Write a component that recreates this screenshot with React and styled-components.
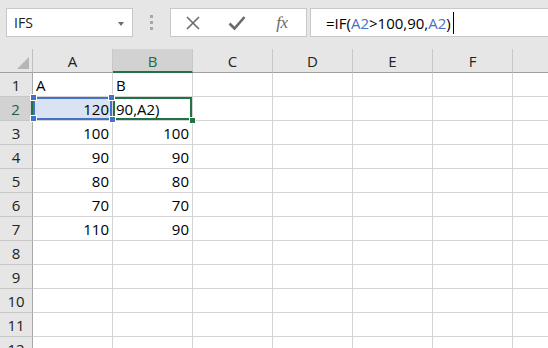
import styled, { createGlobalStyle, css } from 'styled-components';

const GREEN = '#217346';
const BLUE = '#4472c4';
const FONT = `'Open Sans', 'Noto Sans', 'DejaVu Sans', sans-serif`;

const GlobalStyle = createGlobalStyle`
    html, body {
        margin: 0;
        padding: 0;
        background: #e6e6e6;
        font-family: ${FONT};
        overflow: hidden;
    }
`;

const Page = styled.div`
    width: 548px;
    height: 348px;
    overflow: hidden;
    background: #e6e6e6;
`;

const Toolbar = styled.div`
    display: flex;
    align-items: center;
    height: 49px;
    padding: 0 0 4px 6px;
    box-sizing: border-box;
`;

const NameBox = styled.div`
    width: 127px;
    height: 29px;
    box-sizing: border-box;
    background: #fff;
    border: 1px solid #c8c8c8;
    display: flex;
    align-items: center;
    justify-content: space-between;
    padding: 0 8px 0 7px;
    font-size: 14px;
    color: #222;
`;

const Caret = styled.span`
    width: 0;
    height: 0;
    border-left: 3.5px solid transparent;
    border-right: 3.5px solid transparent;
    border-top: 4px solid #6d6d6d;
    margin-top: 2px;
`;

const Grip = styled.div`
    width: 37px;
    display: flex;
    flex-direction: column;
    align-items: center;
    gap: 3px;

    span {
        width: 3px;
        height: 3px;
        background: #a8a8a8;
    }
`;

const ButtonBox = styled.div`
    width: 137px;
    height: 29px;
    box-sizing: border-box;
    background: #fff;
    border: 1px solid #c8c8c8;
    display: grid;
    grid-template-columns: 42px 46px 1fr;
    align-items: center;
    justify-items: center;
    padding-left: 1px;
`;

const Fx = styled.span`
    font-family: 'Liberation Serif', 'DejaVu Serif', serif;
    font-style: italic;
    font-size: 17px;
    color: #6a6a6a;
    letter-spacing: -0.5px;
    margin-right: 2px;
`;

const FormulaBox = styled.div`
    flex: 1;
    height: 29px;
    box-sizing: border-box;
    margin-left: 3px;
    background: #fff;
    border: 1px solid #c8c8c8;
    border-right: none;
    display: flex;
    align-items: center;
    padding-left: 15px;
    font-size: 15px;
    color: #000;
    white-space: nowrap;
`;

const Ref = styled.span`
    color: ${BLUE};
`;

const Cursor = styled.span`
    display: inline-block;
    width: 1px;
    height: 22px;
    background: #000;
    margin-left: 2px;
`;

const Sheet = styled.div`
    display: grid;
    grid-template-columns: 33px repeat(7, 80px);
    grid-auto-rows: 24px;
    background: #fff;
`;

const Corner = styled.div`
    background: #e6e6e6;
    border-right: 1px solid #c0c0c0;
    border-bottom: 1px solid #a0a0a0;
    position: relative;

    &::after {
        content: '';
        position: absolute;
        right: 3px;
        bottom: 3px;
        width: 0;
        height: 0;
        border-left: 12px solid transparent;
        border-bottom: 12px solid #b5b5b5;
    }
`;

const ColHead = styled.div`
    background: ${p => (p.$active ? '#d2d2d2' : '#e6e6e6')};
    color: ${p => (p.$active ? '#1f6b43' : '#222')};
    border-right: 1px solid #c8c8c8;
    border-bottom: ${p => (p.$active ? `2px solid ${GREEN}` : '1px solid #a0a0a0')};
    display: flex;
    align-items: center;
    justify-content: center;
    font-size: 15px;
    padding-top: ${p => (p.$active ? '1px' : '0')};
    box-sizing: border-box;
`;

const RowHead = styled.div`
    background: ${p => (p.$active ? '#d2d2d2' : '#e6e6e6')};
    color: ${p => (p.$active ? '#1f5f3c' : '#222')};
    border-right: ${p => (p.$active ? `2px solid ${GREEN}` : '1px solid #a8a8a8')};
    border-bottom: 1px solid #c8c8c8;
    display: flex;
    align-items: center;
    justify-content: center;
    font-size: 15px;
    box-sizing: border-box;
`;

const handle = color => css`
    content: '';
    position: absolute;
    width: 5px;
    height: 5px;
    background: ${color};
    border: 1px solid #fff;
`;

const Cell = styled.div`
    border-right: 1px solid #d4d4d4;
    border-bottom: 1px solid #d4d4d4;
    box-sizing: border-box;
    display: flex;
    align-items: flex-end;
    justify-content: ${p => (p.$right ? 'flex-end' : 'flex-start')};
    padding: 0 3px 1px 3px;
    font-size: 15px;
    line-height: 20px;
    color: #000;
    white-space: nowrap;
    position: relative;

    ${p =>
        p.$range &&
        css`
            background: #dae3f3;
            box-shadow: inset 0 0 0 2px ${BLUE};
            &::before {
                ${handle(BLUE)};
                left: -3px;
                top: -3px;
            }
            &::after {
                ${handle(BLUE)};
                right: -4px;
                bottom: -3px;
                z-index: 3;
            }
        `}

    ${p =>
        p.$active &&
        css`
            box-shadow: inset 0 0 0 2px ${GREEN};
            &::after {
                ${handle(GREEN)};
                right: -4px;
                bottom: -4px;
                z-index: 3;
            }
        `}
`;

const RangeCorner = styled.span`
    position: absolute;
    width: 5px;
    height: 5px;
    background: ${BLUE};
    border: 1px solid #fff;
    left: ${p => p.$left}px;
    top: ${p => p.$top}px;
    z-index: 3;
`;

// G sits past the right edge; its letter is out of view
const COLS = ['A', 'B', 'C', 'D', 'E', 'F', ''];

const DATA = {
    1: [{ v: 'A' }, { v: 'B' }],
    2: [{ v: '120', right: true, range: true }, { v: '90,A2)', active: true }],
    3: [{ v: '100', right: true }, { v: '100', right: true }],
    4: [{ v: '90', right: true }, { v: '90', right: true }],
    5: [{ v: '80', right: true }, { v: '80', right: true }],
    6: [{ v: '70', right: true }, { v: '70', right: true }],
    7: [{ v: '110', right: true }, { v: '90', right: true }],
};

const XIcon = () => (
    <svg width="16" height="16" viewBox="0 0 16 16">
        <path d="M2 2 L14 14 M14 2 L2 14" stroke="#6a6a6a" strokeWidth="1.6" fill="none" />
    </svg>
);

const CheckIcon = () => (
    <svg width="18" height="16" viewBox="0 0 18 16">
        <path d="M1.5 8.5 L6.5 13.5 L16.5 2" stroke="#6a6a6a" strokeWidth="2.6" fill="none" />
    </svg>
);

export default function App() {
    const rows = Array.from({ length: 12 }, (_, i) => i + 1);

    return (
        <Page>
            <GlobalStyle />
            <Toolbar>
                <NameBox>
                    IFS
                    <Caret />
                </NameBox>
                <Grip>
                    <span />
                    <span />
                    <span />
                </Grip>
                <ButtonBox>
                    <XIcon />
                    <CheckIcon />
                    <Fx>fx</Fx>
                </ButtonBox>
                <FormulaBox>
                    =IF(<Ref>A2</Ref>&gt;100,90,<Ref>A2</Ref>)
                    <Cursor />
                </FormulaBox>
            </Toolbar>
            <Sheet>
                <Corner />
                {COLS.map((c, i) => (
                    <ColHead key={i} $active={c === 'B'}>
                        {c}
                    </ColHead>
                ))}
                {rows.map(r => [
                    <RowHead key={`h${r}`} $active={r === 2}>
                        {r}
                    </RowHead>,
                    ...COLS.map((c, ci) => {
                        const d = (DATA[r] || [])[ci] || {};
                        return (
                            <Cell key={`${ci}-${r}`} $right={d.right} $range={d.range} $active={d.active}>
                                {d.range && <RangeCorner $left={75} $top={-3} />}
                                {d.range && <RangeCorner $left={-3} $top={18} />}
                                {d.v}
                            </Cell>
                        );
                    }),
                ])}
            </Sheet>
        </Page>
    );
}
